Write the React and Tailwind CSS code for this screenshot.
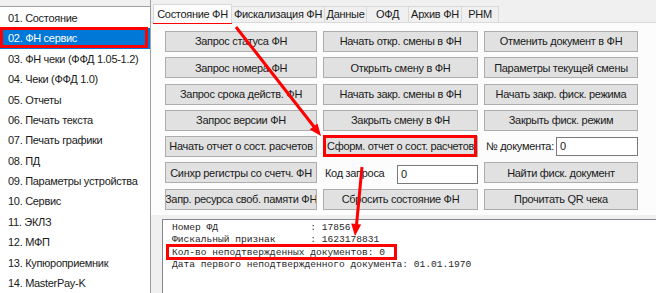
import React from "react";

const listItems = [
  "01. Состояние",
  "02. ФН сервис",
  "03. ФН чеки (ФФД 1.05-1.2)",
  "04. Чеки (ФФД 1.0)",
  "05. Отчеты",
  "06. Печать текста",
  "07. Печать графики",
  "08. ПД",
  "09. Параметры устройства",
  "10. Сервис",
  "11. ЭКЛЗ",
  "12. МФП",
  "13. Купюроприемник",
  "14. MasterPay-K",
];

const tabs = [
  { label: "Состояние ФН", w: "w-[79px]", active: true },
  { label: "Фискализация ФН", w: "w-[93px]" },
  { label: "Данные", w: "w-[42px]" },
  { label: "ОФД", w: "w-[42px]" },
  { label: "Архив ФН", w: "w-[53px]" },
  { label: "РНМ", w: "w-[37px]" },
];

function Btn({ children }) {
  return (
    <div className="h-[21px] bg-[#e1e1e1] border border-[#adadad] flex items-center justify-center text-[11px] text-[#1a1a1a] whitespace-nowrap overflow-hidden">
      {children}
    </div>
  );
}

function Field({ label, inputW, mt }) {
  return (
    <div className="h-[21px] flex items-center text-[11px] text-[#1a1a1a] whitespace-nowrap">
      <span className="flex-1 pl-[2px]">{label}</span>
      <div
        className={`${inputW} ${mt} h-[19px] bg-white border border-[#7a7a7a] flex items-center pl-[3px] text-[11px]`}
      >
        0
      </div>
    </div>
  );
}

const textLines = [
  "Номер ФД                : 17856",
  "Фискальный признак      : 1623178831",
  "Кол-во неподтвержденных документов: 0",
  "Дата первого неподтвержденного документа: 01.01.1970",
];

export default function App() {
  return (
    <div
      className="relative w-[656px] h-[293px] overflow-hidden bg-[#f0f0f0] flex tracking-[-0.3px]"
      style={{ fontFamily: '"Liberation Sans", Arial, sans-serif' }}
    >
      {/* Left list */}
      <div className="w-[151px] shrink-0 flex flex-col pt-[6px] border-r border-[#a0a0a0]">
        <div className="flex-1 bg-white border-t border-[#a0a0a0] pt-[1px]">
          {listItems.map((it, i) => (
            <div
              key={it}
              className={`h-[20.4px] flex items-center pl-[8px] text-[11px] whitespace-nowrap ${
                i === 1 ? "bg-[#0078d7] text-white" : "text-[#1a1a1a]"
              }`}
            >
              {it}
            </div>
          ))}
        </div>
      </div>

      {/* Right side */}
      <div className="flex-1 flex flex-col">
        {/* Tabs */}
        <div className="h-[22px] flex items-end pl-[2px] relative z-10">
          {tabs.map((t) =>
            t.active ? (
              <div
                key={t.label}
                className={`${t.w} h-[19px] mb-[-1px] bg-[#fcfcfc] border border-b-0 border-[#d9d9d9] flex items-center justify-center text-[11px] text-[#1a1a1a] whitespace-nowrap`}
              >
                {t.label}
              </div>
            ) : (
              <div
                key={t.label}
                className={`${t.w} h-[16px] bg-[#f0f0f0] border border-b-0 border-l-0 border-[#d9d9d9] flex items-center justify-center text-[11px] text-[#1a1a1a] whitespace-nowrap`}
              >
                {t.label}
              </div>
            )
          )}
        </div>

        {/* Panel */}
        <div className="h-[193px] bg-[#fcfcfc] border-t border-[#d9d9d9] pl-[14px] pt-[8px]">
          <div className="grid grid-cols-[152px_155px_154px] gap-x-[6px] gap-y-[5.3px]">
            <Btn>Запрос статуса ФН</Btn>
            <Btn>Начать откр. смены в ФН</Btn>
            <Btn>Отменить документ в ФН</Btn>

            <Btn>Запрос номера ФН</Btn>
            <Btn>Открыть смену в ФН</Btn>
            <Btn>Параметры текущей смены</Btn>

            <Btn>Запрос срока действ. ФН</Btn>
            <Btn>Начать закр. смены в ФН</Btn>
            <Btn>Начать закр. фиск. режима</Btn>

            <Btn>Запрос версии ФН</Btn>
            <Btn>Закрыть смену в ФН</Btn>
            <Btn>Закрыть фиск. режим</Btn>

            <Btn>Начать отчет о сост. расчетов</Btn>
            <Btn>Сформ. отчет о сост. расчетов</Btn>
            <Field label="№ документа:" inputW="w-[82px]" mt="" />

            <Btn>Синхр регистры со счетч. ФН</Btn>
            <Field label="Код запроса" inputW="w-[81px]" mt="mt-[3px]" />
            <Btn>Найти фиск. документ</Btn>

            <Btn>Запр. ресурса своб. памяти ФН</Btn>
            <Btn>Сбросить состояние ФН</Btn>
            <Btn>Прочитать QR чека</Btn>
          </div>
        </div>

        {/* Output text box */}
        <div className="flex-1 mt-[4px] ml-[11px] bg-white border-t border-l border-[#828790] pl-[9px] pt-[2px]">
          <pre
            className="text-[9.6px] leading-[12.3px] text-[#262626] m-0 tracking-normal"
            style={{ fontFamily: '"Liberation Mono", "Courier New", monospace' }}
          >
            {textLines.join("\n")}
          </pre>
        </div>
      </div>

      {/* Annotation overlay */}
      <svg
        className="absolute inset-0 pointer-events-none"
        width="656"
        height="293"
        viewBox="0 0 656 293"
      >
        <g fill="none" stroke="#ff0000" strokeWidth="3">
          <rect x="1.5" y="28.5" width="145" height="18" />
          <rect x="154.5" y="5.5" width="76" height="17" />
          <rect x="324.5" y="136.5" width="151" height="19" />
          <rect x="167.5" y="245.5" width="228" height="13" />
          <line x1="236" y1="27" x2="315" y2="128" />
          <line x1="362" y1="167" x2="356.5" y2="225" />
        </g>
        <g fill="#ff0000">
          <polygon points="309.7,129.6 317.5,123.4 321,136" />
          <polygon points="361.2,224.6 351.2,223.6 355,236" />
        </g>
      </svg>
    </div>
  );
}
